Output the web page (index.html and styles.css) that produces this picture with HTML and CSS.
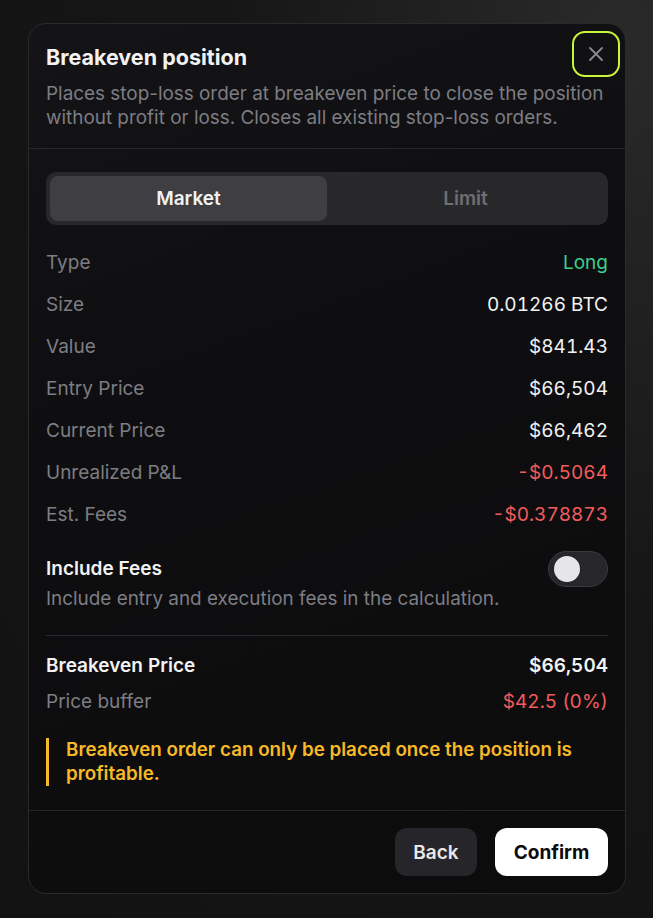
FILE: index.html
```html
<!DOCTYPE html>
<html>
<head>
<meta charset="utf-8">
<link rel="stylesheet" href="styles.css">
</head>
<body>
<div class="modal">
  <div class="header">
    <h1 class="title">Breakeven position</h1>
    <p class="desc">Places stop-loss order at breakeven price to close the position without profit or loss. Closes all existing stop-loss orders.</p>
    <button class="close" aria-label="Close">
      <svg width="16" height="16" viewBox="0 0 16 16"><path d="M2 2L14 14M14 2L2 14" stroke="#8b8b90" stroke-width="1.8" stroke-linecap="round" fill="none"/></svg>
    </button>
  </div>
  <div class="body">
    <div class="tabs">
      <div class="tab active">Market</div>
      <div class="tab">Limit</div>
    </div>
    <div class="rows">
      <div class="row"><span class="label">Type</span><span class="value green">Long</span></div>
      <div class="row"><span class="label">Size</span><span class="value">0.01266 BTC</span></div>
      <div class="row"><span class="label">Value</span><span class="value">$841.43</span></div>
      <div class="row"><span class="label">Entry Price</span><span class="value">$66,504</span></div>
      <div class="row"><span class="label">Current Price</span><span class="value">$66,462</span></div>
      <div class="row"><span class="label">Unrealized P&amp;L</span><span class="value red">-$0.5064</span></div>
      <div class="row"><span class="label">Est. Fees</span><span class="value red">-$0.378873</span></div>
    </div>
    <div class="fees">
      <div class="fees-text">
        <div class="fees-title">Include Fees</div>
        <div class="fees-desc">Include entry and execution fees in the calculation.</div>
      </div>
      <div class="toggle"><span class="knob"></span></div>
    </div>
    <div class="sep"></div>
    <div class="result">
      <div class="rrow"><span class="strong">Breakeven Price</span><span class="strong">$66,504</span></div>
      <div class="rrow"><span class="label">Price buffer</span><span class="value red">$42.5 (0%)</span></div>
    </div>
    <div class="warning">Breakeven order can only be placed once the position is profitable.</div>
  </div>
  <div class="footer">
    <button class="btn back">Back</button>
    <button class="btn confirm">Confirm</button>
  </div>
</div>
</body>
</html>
```

FILE: styles.css
```css
* { box-sizing: border-box; }
html, body { margin: 0; height: 100%; }
body {
  font-family: Inter, "Noto Sans", sans-serif;
  background: radial-gradient(ellipse at 95% 5%, #2a2a2a 0%, #161616 45%, #121212 100%);
  padding: 23px 27px 0 28px;
  color: #f2f2f3;
}
.modal {
  width: 598px;
  background: linear-gradient(160deg, #141416 0%, #0e0e10 40%, #0c0c0d 100%);
  border: 1px solid #2a2a2d;
  border-radius: 18px;
}
.header {
  position: relative;
  padding: 19px 18px 18px 17px;
  border-bottom: 1px solid #26262a;
}
.title {
  margin: 0;
  font-size: 21.5px;
  line-height: 28px;
  font-weight: 700;
  color: #f2f2f3;
}
.desc {
  margin: 11px 0 0;
  font-size: 18.9px;
  line-height: 24px;
  color: #7d7d84;
}
.close {
  position: absolute;
  top: 7px;
  right: 5px;
  width: 48px;
  height: 46px;
  border: 2.5px solid #c9f53b;
  border-radius: 13px;
  background: transparent;
  display: flex;
  align-items: center;
  justify-content: center;
  padding: 0;
}
.body {
  padding: 23px 17px 24px 17px;
}
.tabs {
  display: flex;
  background: #28282b;
  border-radius: 10px;
  padding: 4px;
  height: 53px;
}
.tab {
  flex: 1;
  display: flex;
  align-items: center;
  justify-content: center;
  font-size: 19px;
  font-weight: 600;
  color: #6e6e74;
  border-radius: 8px;
}
.tab.active {
  background: #3e3e43;
  color: #f2f2f3;
}
.rows { margin-top: 17px; }
.row, .rrow {
  display: flex;
  justify-content: space-between;
  align-items: center;
  font-size: 19px;
  line-height: 24px;
}
.value { font-variant-numeric: tabular-nums; }
.row { padding: 9px 0; }
.label { color: #7d7d84; }
.value { color: #f2f2f3; }
.green { color: #3ecf8e; }
.red { color: #f25c5c; }
.fees {
  display: flex;
  justify-content: space-between;
  align-items: flex-start;
  margin-top: 15px;
}
.fees-text { padding-top: 6px; }
.fees-title {
  font-size: 19px;
  line-height: 24px;
  font-weight: 600;
}
.fees-desc {
  margin-top: 6px;
  font-size: 18.9px;
  line-height: 24px;
  color: #7d7d84;
}
.toggle {
  width: 60px;
  height: 36px;
  border-radius: 18px;
  background: #27272a;
  border: 1px solid #3a3a3f;
  display: flex;
  align-items: center;
  padding-left: 5px;
}
.knob {
  width: 26px;
  height: 26px;
  border-radius: 50%;
  background: #e6e6e9;
}
.sep {
  height: 1px;
  background: #2a2a2e;
  margin-top: 24px;
}
.result { padding-top: 18px; }
.rrow + .rrow { margin-top: 12px; }
.strong { font-weight: 600; color: #f2f2f3; font-variant-numeric: tabular-nums; }
.warning {
  margin-top: 24px;
  border-left: 3px solid #f7b928;
  padding-left: 17px;
  font-size: 18.8px;
  line-height: 24px;
  font-weight: 600;
  color: #f7b928;
}
.footer {
  border-top: 1px solid #26262a;
  display: flex;
  justify-content: flex-end;
  gap: 18px;
  padding: 17px 17px 17px;
}
.btn {
  height: 48px;
  border: none;
  border-radius: 12px;
  font-family: inherit;
  font-size: 19px;
  font-weight: 600;
  padding: 0;
}
.back { background: #26262a; color: #e8e8ea; width: 82px; }
.confirm { background: #ffffff; color: #0b0b0c; width: 113px; font-weight: 700; }
```
